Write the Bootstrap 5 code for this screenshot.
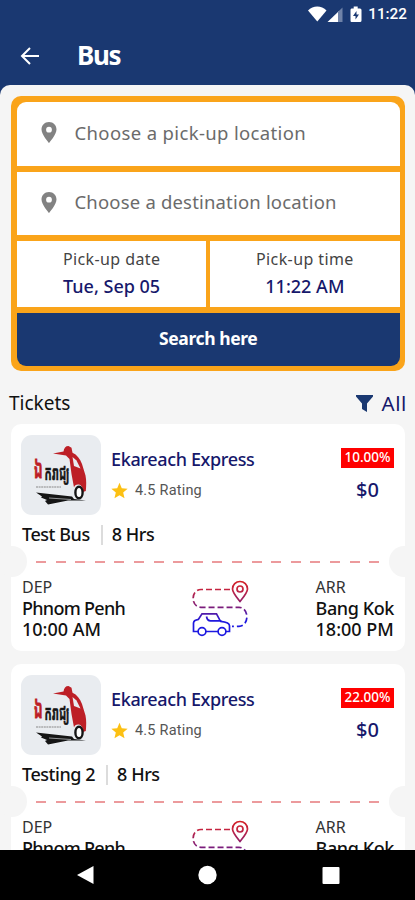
<!DOCTYPE html>
<html lang="en">
<head>
<meta charset="utf-8">
<meta name="viewport" content="width=device-width, initial-scale=1">
<title>Bus</title>
<link href="https://cdn.jsdelivr.net/npm/bootstrap@5.3.0/dist/css/bootstrap.min.css" rel="stylesheet">
<style>
  :root { --navy: #1a3871; --orange: #faa41a; --ink: #16186b; --page: #f5f5f5; }
  body { font-family: "Noto Sans", "Open Sans", sans-serif; background: var(--navy); color: #111; line-height: 1; }
  .screen { width: 415px; height: 900px; }
  .status { height: 28px; padding-right: 8px; font: 500 15.3px/28px Roboto, sans-serif; }
  .status svg { margin-right: 6px; }
  .appbar { height: 57px; padding: 0 20px 1px; gap: 37px; }
  .appbar h1 { font-size: 26px; font-weight: 700; letter-spacing: -1.4px; }
  .sheet { background: var(--page); border-radius: 10px 10px 0 0; padding: 11px 10px 0 11px; min-height: 0; }
  .finder { background: var(--orange); border-radius: 10px; padding: 6px 5.5px 5px 6px; gap: 6px; height: 275px; flex: none; }
  .field { background: #fff; height: 63.5px; padding: 0 0 2px 24px; gap: 17.5px; color: #6b6b6b; font-size: 18.5px; letter-spacing: .36px; }
  .field + .field { letter-spacing: .18px; }
  .field:first-child { border-radius: 9px 9px 0 0; }
  .slot { background: #fff; height: 66px; font-size: 16px; letter-spacing: .4px; color: #444; padding-top: 10px; }
  .slot strong { font-weight: 500; font-size: 18px; letter-spacing: 0; color: var(--ink); margin-top: 10px; }
  .search-btn { --bs-btn-bg: var(--navy); --bs-btn-color: #fff; --bs-btn-border-width: 0; --bs-btn-border-radius: 0 0 9px 9px; --bs-btn-font-weight: 700; height: 53px; font-size: 17.5px; letter-spacing: -.4px; padding: 4px 0 6px; }
  .list-head { height: 53px; font-size: 19px; padding-top: 11px; margin: 0 -2px 0 -2px; }
  .list-head .all { color: var(--ink); gap: 9px; font-size: 20.5px; letter-spacing: .6px; }
  .ticket { background: #fff; border-radius: 10px; height: 227px; margin-bottom: 13px; padding: 11px; flex: none; }
  .ticket::before, .ticket::after { content: ""; position: absolute; top: 122px; width: 30px; height: 31px; border-radius: 50%; background: var(--page); }
  .ticket::before { left: -14px; }
  .ticket::after { right: -14px; }
  .logo { width: 80px; height: 80px; border-radius: 11px; background: #e9ecf0; flex: none; margin-left: -1px; }
  .info { padding-left: 10px; }
  .name { color: var(--ink); font-size: 18px; font-weight: 500; margin-top: 15px; letter-spacing: -.35px; }
  .rating { font: 400 14.5px/16px Roboto, sans-serif; letter-spacing: .2px; color: #555; gap: 7px; margin-top: 14px; }
  .off { background: #f00; color: #fff; font-size: 13.5px; font-weight: 500; height: 20px; width: 53px; margin-top: 13px; }
  .price { color: var(--ink); font-size: 20px; font-weight: 500; margin-top: 12px; }
  .facts { height: 20px; margin-top: 10px; font-size: 18px; font-weight: 500; letter-spacing: -.45px; }
  .facts span { margin-top: -2px; }
  .facts .rule { width: 2px; background: #dcdcdc; margin: 0 9px 0 11px; }
  .dashes { height: 1.6px; margin: 16px 11px 0 14px; background: repeating-linear-gradient(90deg, #ec9a9c 0 10px, transparent 10px 19.6px); }
  .stop { font-size: 18px; font-weight: 500; line-height: 21.5px; }
  .stop .tag { font-size: 16px; font-weight: 400; color: #333; line-height: 21px; }
  .stop .dep-city { letter-spacing: -.7px; }
  .stop .arr-city { letter-spacing: -.4px; }
  .legs { margin-top: 14px; }
  .trip { margin-top: 2.5px; }
  .softkeys { height: 50px; background: #000; flex: none; }
</style>
<script src="https://cdn.jsdelivr.net/npm/bootstrap@5.3.0/dist/js/bootstrap.bundle.min.js"></script>
</head>
<body>
<svg width="0" height="0" class="position-absolute" aria-hidden="true">
  <defs>
    <linearGradient id="fade" gradientUnits="userSpaceOnUse" x1="0" y1="0" x2="0" y2="42"><stop offset="0" stop-color="#d61f1f"/><stop offset=".25" stop-color="#c42440"/><stop offset=".68" stop-color="#7a1c7c"/><stop offset="1" stop-color="#1d18e0"/></linearGradient>
  </defs>
  <symbol id="pin" viewBox="0 0 16 21"><path fill="#828282" fill-rule="evenodd" d="M8 0C3.600 0 .5 3.300.5 7.500.5 12.500 8 21 8 21s7.500-8.500 7.500-13.500C15.500 3.300 12.400 0 8 0zm0 4.800a2.900 2.900 0 1 1 0 5.800 2.900 2.900 0 0 1 0-5.800z"/></symbol>
  <symbol id="star" viewBox="0 0 24 24"><path fill="#fcc013" d="m12 1 3.200 7.700 8.300.7-6.300 5.400 1.900 8.100L12 18.600l-7.100 4.300 1.900-8.100L.5 9.400l8.300-.7z"/></symbol>
  <symbol id="trip" viewBox="0 0 58 58">
    <g fill="none" stroke="url(#fade)" stroke-width="1.700">
      <path stroke-dasharray="6 3" d="M39 10.500H10C-.5 10.500-.5 28.300 10 28.300h38c10.500 0 10.500 19 0 19h-7"/>
      <path d="M49 22.500c-4.500-5.500-7.500-9-7.500-12.500a7.500 7.500 0 0 1 15 0c0 3.500-3 7-7.500 12.500z"/>
      <circle cx="49" cy="10" r="3"/>
      <path d="M7 52.500H2.500V44c0-2 2-3.200 5-3.700l3.500-5.500h14.500l4 7.500c6 .5 9 1.500 9 4.500v5.700h-4M15 52.500h12M15.500 37.500c.5 3 1.500 4.300 4 4.300h11"/>
      <circle cx="11" cy="52.500" r="3.900"/><circle cx="31" cy="52.500" r="3.900"/>
    </g>
  </symbol>
  <symbol id="van" viewBox="0 0 80 80">
    <path fill="#bd1f26" d="M32 18.500l10.500-2C43 13 44.500 11 47.500 11l3 1.700 1 5c4.500 2 7.500 6 9.500 11.300l3.500 11.500c1 5 .8 10 .3 15.500l-2.800 1c0-5-2-7.500-5-7.500-2.200 0-3.500 1.300-4 3L50.500 39l-2-15-3.500-3.500z"/>
    <path fill="#e9ecf0" d="M51.500 22l4 3.500 4 8-6.500-2.500z"/>
    <ellipse cx="58" cy="57.500" rx="3.600" ry="5.800" fill="#fff" stroke="#151515" stroke-width="2.400"/>
    <path fill="#151515" d="M15 57.500l36 4 2 2.500 12 1.500H47l-20 4-3-3.500 2-1-6-2.500 1-1z"/>
    <path stroke="#e9ecf0" stroke-width=".6" fill="none" d="M28 63l22 1.500"/>
    <path stroke="#888" stroke-width="1" stroke-dasharray="2 .6" d="M15 52h25"/>
  </symbol>
</svg>

<div class="screen d-flex flex-column overflow-hidden">
  <header class="text-white">
    <div class="status d-flex justify-content-end align-items-center">
      <svg width="54" height="17" viewBox="0 0 54 17"><path fill="#fff" d="M0 4.500C5-.8 13.500-.8 18.500 4.500L9.300 15.500z"/><path fill="#fff" d="M19.500 16 31 5v11z"/><path fill="#6f82a8" d="M30 5.800 34.500 1.500V16H30z"/><path fill="#fff" fill-rule="evenodd" d="M43.500 2.500h2.200V.5h4v2h2.300q1.500 0 1.500 1.500v10.500q0 1.500-1.500 1.500h-8.500q-1 0-1-1.500V4q0-1.500 1-1.500zm5 2.500L45 10h2.500v3.500L51 8.500h-2.500z"/></svg>
      <span>11:22</span>
    </div>
    <div class="appbar d-flex align-items-center">
      <svg width="20" height="18" viewBox="0 0 20 18" fill="none" stroke="#fff" stroke-width="2"><path d="M19 9H2.500M10 1 2 9l8 8"/></svg>
      <h1 class="m-0">Bus</h1>
    </div>
  </header>

  <main class="sheet d-flex flex-column flex-fill overflow-hidden">
    <form class="finder d-flex flex-column">
      <div class="field d-flex align-items-center"><svg width="16" height="21"><use href="#pin"/></svg><span>Choose a pick-up location</span></div>
      <div class="field d-flex align-items-center"><svg width="16" height="21"><use href="#pin"/></svg><span>Choose a destination location</span></div>
      <div class="d-flex gap-1">
        <div class="slot flex-fill w-50 d-flex flex-column align-items-center"><span>Pick-up date</span><strong>Tue, Sep 05</strong></div>
        <div class="slot flex-fill w-50 d-flex flex-column align-items-center"><span>Pick-up time</span><strong>11:22 AM</strong></div>
      </div>
      <button type="button" class="btn search-btn w-100">Search here</button>
    </form>

    <div class="list-head d-flex justify-content-between align-items-center flex-shrink-0 pb-0">
      <span>Tickets</span>
      <span class="all d-flex align-items-center"><svg width="17" height="17" viewBox="0 0 17 17"><path fill="#1a3871" d="M0 0h17v1.500L11 8.500V17L6 14V8.500L0 1.500z"/></svg><span>All</span></span>
    </div>

    <article class="ticket position-relative">
      <div class="d-flex">
        <svg class="logo" viewBox="0 0 80 80"><use href="#van"/><g font-family="Noto Sans Khmer, sans-serif" font-weight="700"><text transform="translate(13 43) scale(.8 1.6)" font-size="16" fill="#bd1f26" stroke="#bd1f26" stroke-width=".5">ឯ</text><text transform="translate(23.500 45) scale(.76 1.4)" font-size="14" fill="#151515" stroke="#151515" stroke-width=".4">ករាជ្យ</text></g></svg>
        <div class="info flex-fill"><div class="name">Ekareach Express</div><div class="rating d-flex align-items-center"><svg width="17" height="17"><use href="#star"/></svg>4.5 Rating</div></div>
        <div class="d-flex flex-column align-items-center"><span class="off d-flex align-items-center justify-content-center">10.00%</span><span class="price">$0</span></div>
      </div>
      <div class="facts d-flex align-items-center"><span>Test Bus</span><i class="rule align-self-stretch"></i><span>8 Hrs</span></div>
      <div class="dashes"></div>
      <div class="legs d-flex justify-content-between">
        <div class="stop"><div class="tag">DEP</div><div class="dep-city">Phnom Penh</div><div>10:00 AM</div></div>
        <svg class="trip" width="58" height="58"><use href="#trip"/></svg>
        <div class="stop"><div class="tag">ARR</div><div class="arr-city">Bang Kok</div><div>18:00 PM</div></div>
      </div>
    </article>

    <article class="ticket position-relative">
      <div class="d-flex">
        <svg class="logo" viewBox="0 0 80 80"><use href="#van"/><g font-family="Noto Sans Khmer, sans-serif" font-weight="700"><text transform="translate(13 43) scale(.8 1.6)" font-size="16" fill="#bd1f26" stroke="#bd1f26" stroke-width=".5">ឯ</text><text transform="translate(23.500 45) scale(.76 1.4)" font-size="14" fill="#151515" stroke="#151515" stroke-width=".4">ករាជ្យ</text></g></svg>
        <div class="info flex-fill"><div class="name">Ekareach Express</div><div class="rating d-flex align-items-center"><svg width="17" height="17"><use href="#star"/></svg>4.5 Rating</div></div>
        <div class="d-flex flex-column align-items-center"><span class="off d-flex align-items-center justify-content-center">22.00%</span><span class="price">$0</span></div>
      </div>
      <div class="facts d-flex align-items-center"><span>Testing 2</span><i class="rule align-self-stretch"></i><span>8 Hrs</span></div>
      <div class="dashes"></div>
      <div class="legs d-flex justify-content-between">
        <div class="stop"><div class="tag">DEP</div><div class="dep-city">Phnom Penh</div><div>10:00 AM</div></div>
        <svg class="trip" width="58" height="58"><use href="#trip"/></svg>
        <div class="stop"><div class="tag">ARR</div><div class="arr-city">Bang Kok</div><div>18:00 PM</div></div>
      </div>
    </article>
  </main>

  <nav class="softkeys d-flex align-items-center">
    <svg width="415" height="50"><path fill="#fff" d="M77 25 93.500 16v18z"/><circle cx="207.500" cy="25" r="9.200" fill="#fff"/><rect x="322.500" y="17" width="17" height="17" rx="1" fill="#fff"/></svg>
  </nav>
</div>
</body>
</html>
